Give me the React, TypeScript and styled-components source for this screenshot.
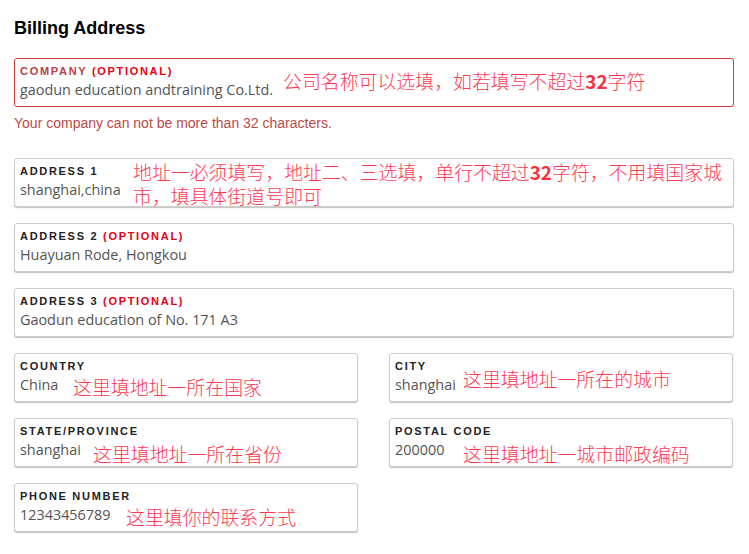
import React from "react";
import styled, { createGlobalStyle } from "styled-components";

const Global = createGlobalStyle`
  html, body { margin: 0; padding: 0; background: #fff; }
  body { font-family: "Liberation Sans", Arial, sans-serif; }
  * { box-sizing: border-box; }
`;

const Page = styled.div`
  width: 749px;
  padding: 18px 15px 20px 14px;
`;

const Title = styled.h2`
  margin: 0 0 20px;
  font-family: "Liberation Sans", Arial, sans-serif;
  font-size: 18px;
  line-height: 20px;
  font-weight: bold;
  color: #000;
`;

const Stack = styled.div`
  display: flex;
  flex-direction: column;
  gap: 16px;
`;

const Grid = styled.div`
  display: grid;
  grid-template-columns: 344px 344px;
  column-gap: 31px;
  row-gap: 16px;
`;

const Field = styled.div<{ $error?: boolean }>`
  position: relative;
  height: 49px;
  padding: 5px 5px 6px;
  border: 1px solid ${(p) => (p.$error ? "#d0393b" : "#cfcdc8")};
  border-radius: 3px;
  background: #fff;
  box-shadow: ${(p) => (p.$error ? "none" : "0 1px 1px 0 rgba(90, 80, 70, 0.35)")};
`;

const Label = styled.div<{ $error?: boolean }>`
  font-family: "Liberation Sans", Arial, sans-serif;
  font-size: 11px;
  line-height: 14px;
  font-weight: bold;
  letter-spacing: 1.7px;
  text-transform: uppercase;
  color: ${(p) => (p.$error ? "#b9404a" : "#222")};
  margin-bottom: 2px;
  white-space: nowrap;
`;

const Optional = styled.span`
  color: #e60012;
`;

const Value = styled.div`
  font-family: "Open Sans", "Liberation Sans", sans-serif;
  font-size: 14.4px;
  line-height: 20px;
  color: #555;
  white-space: nowrap;
`;

const ErrorText = styled.div`
  margin: 8px 0 27px;
  font-family: "Liberation Sans", Arial, sans-serif;
  font-size: 14px;
  line-height: 16px;
  color: #b94a48;
`;

const Note = styled.span<{ $left: number; $top: number; $width?: number }>`
  position: absolute;
  left: ${(p) => p.$left}px;
  top: ${(p) => p.$top}px;
  width: ${(p) => (p.$width ? `${p.$width}px` : "auto")};
  white-space: ${(p) => (p.$width ? "normal" : "nowrap")};
  font-family: "Noto Sans CJK SC", sans-serif;
  font-weight: 300;
  font-size: 18.9px;
  line-height: 23.5px;
  color: #ff3853;
  pointer-events: none;
`;

const Num = styled.b`
  font-weight: 700;
  color: #f5333f;
`;

type F = {
  label: string;
  optional?: boolean;
  value: string;
  note?: React.ReactNode;
  nl: number;
  nt: number;
  nw?: number;
  error?: boolean;
};

const FieldBox = ({ label, optional, value, note, nl, nt, nw, error }: F) => (
  <Field $error={error}>
    <Label $error={error}>
      {label}
      {optional && <Optional> (OPTIONAL)</Optional>}
    </Label>
    <Value>{value}</Value>
    {note && (
      <Note $left={nl} $top={nt} $width={nw}>
        {note}
      </Note>
    )}
  </Field>
);

export default function App() {
  return (
    <Page>
      <Global />
      <Title>Billing Address</Title>
      <FieldBox
        error
        label="Company"
        optional
        value="gaodun education andtraining Co.Ltd."
        nl={268}
        nt={10}
        note={
          <>
            公司名称可以选填，如若填写不超过<Num>32</Num>字符
          </>
        }
      />
      <ErrorText>Your company can not be more than 32 characters.</ErrorText>
      <Stack>
        <FieldBox
          label="Address 1"
          value="shanghai,china"
          nl={118}
          nt={1}
          nw={600}
          note={
            <>
              地址一必须填写，地址二、三选填，单行不超过<Num>32</Num>字符，不用填国家城市，填具体街道号即可
            </>
          }
        />
        <FieldBox label="Address 2" optional value="Huayuan Rode, Hongkou" nl={0} nt={0} />
        <FieldBox label="Address 3" optional value="Gaodun education of No. 171 A3" nl={0} nt={0} />
        <Grid>
          <FieldBox label="Country" value="China" nl={58} nt={21} note="这里填地址一所在国家" />
          <FieldBox label="City" value="shanghai" nl={73} nt={13} note="这里填地址一所在的城市" />
          <FieldBox label="State/Province" value="shanghai" nl={78} nt={23} note="这里填地址一所在省份" />
          <FieldBox label="Postal Code" value="200000" nl={73} nt={23} note="这里填地址一城市邮政编码" />
          <FieldBox label="Phone Number" value="12343456789" nl={111} nt={21} note="这里填你的联系方式" />
        </Grid>
      </Stack>
    </Page>
  );
}
